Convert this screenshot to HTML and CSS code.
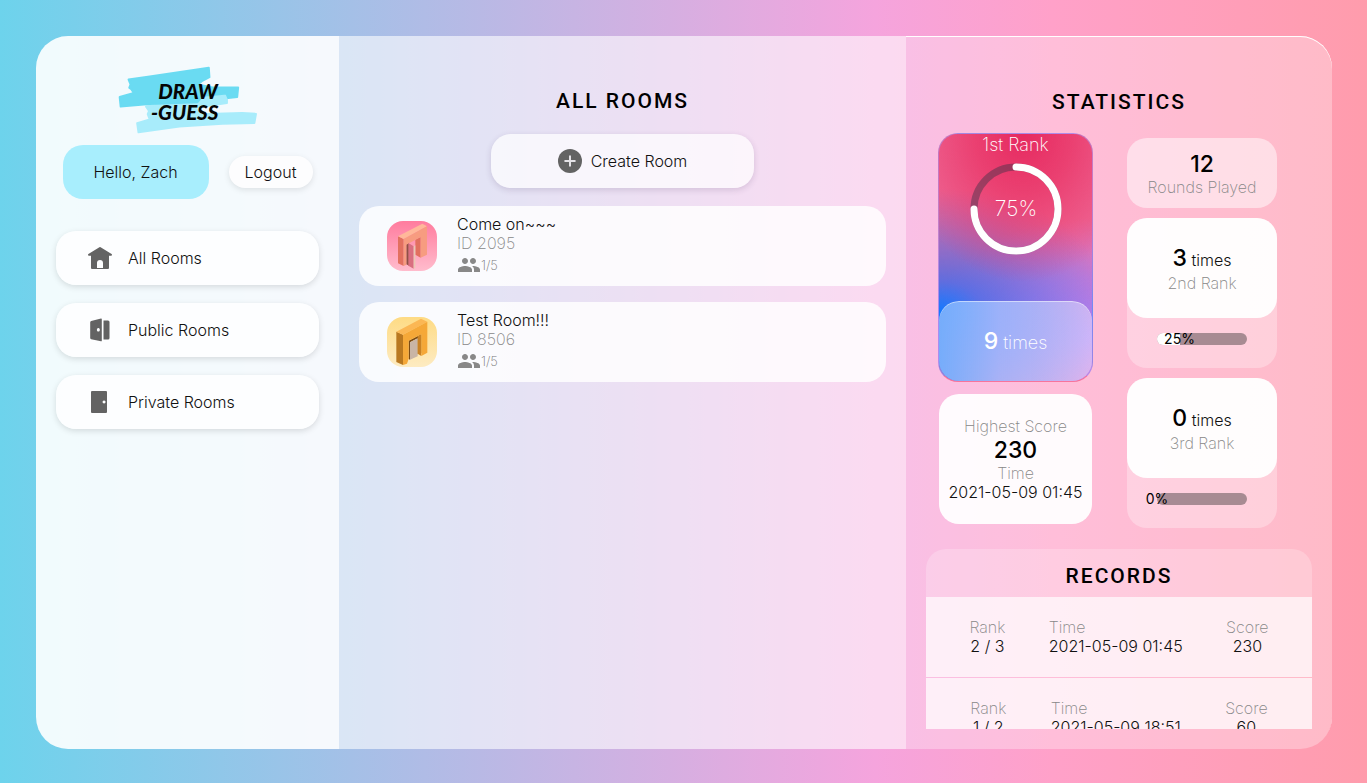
FILE: index.html
```html
<!DOCTYPE html>
<html lang="en">
<head>
<meta charset="utf-8">
<meta name="viewport" content="width=device-width, initial-scale=1">
<title>Draw-Guess</title>
<link rel="stylesheet" href="styles.css">
</head>
<body>
<div class="app">
  <aside class="sidebar">
    <svg class="logo" viewBox="246 90 420 206" role="img" aria-label="Draw-Guess">
      <path fill="#a8ecfb" stroke="#a8ecfb" stroke-width="6" stroke-linejoin="round" d="M329 213 L574 176 L574 202 L480 216 L490 236 L620 232 L662 235 L657 263 L560 265 L430 273 L306 291 L302 263 L340 252 L334 236 L338 226Z"/>
      <path fill="#6adbf2" stroke="#6adbf2" stroke-width="6" stroke-linejoin="round" d="M276 131 L340 122 L519 95 L521 124 L498 136 L486 146 L530 155 L608 155 L605 184 L578 187 L572 173 L500 181 L484 200 L340 205 L252 213 L249 184 L292 172 L284 160 L278 156 L282 146Z"/>
      <text class="logo-text" x="366" y="190">DRAW</text>
      <text class="logo-text" x="344" y="255">-GUESS</text>
    </svg>
    <div class="user">
      <div class="hello">Hello, Zach</div>
      <button class="logout" type="button">Logout</button>
    </div>
    <nav class="nav">
      <button class="nav-item" type="button">
        <svg class="icon" viewBox="0 0 24 24"><path fill-rule="evenodd" d="M11.4 1.2q.6-.4 1.2 0L23.6 8q.6.5.2 1.3-.4.7-1.2.5H21V22q0 1-1 1H4q-1 0-1-1V9.800H1.400q-.8.2-1.200-.5Q-.2 8.500.4 8ZM9 22h6v-5q0-3-3-3t-3 3Z"/></svg>
        All Rooms
      </button>
      <button class="nav-item" type="button">
        <svg class="icon" viewBox="0 0 24 24"><path fill-rule="evenodd" d="M3.200 3 13 .6q.8-.1.8.7v21.400q0 .8-.8.6L3.200 21.200q-1-.3-1-1.200V4.200q0-1 1-1.200ZM10.300 10a1.500 1.800 0 1 0 .1 0ZM15.500 2.500h4.500q1.500 0 1.500 1.500v16q0 1.500-1.500 1.500h-4.500Z"/></svg>
        Public Rooms
      </button>
      <button class="nav-item" type="button">
        <svg class="icon" viewBox="0 0 24 24"><path fill-rule="evenodd" d="M4 1h14q1 0 1 1v20q0 1-1 1H4q-1 0-1-1V2q0-1 1-1ZM16 10.500a1.500 1.500 0 1 0 .1 0Z"/></svg>
        Private Rooms
      </button>
    </nav>
  </aside>

  <main class="rooms">
    <h1 class="title">ALL ROOMS</h1>
    <button class="create" type="button">
      <svg class="icon" viewBox="0 0 24 24"><circle cx="12" cy="12" r="12"/><path d="M12 7.200v9.600M7.200 12h9.600" stroke="#e4e2e6" stroke-width="2" stroke-linecap="round"/></svg>
      Create Room
    </button>
    <ul class="room-list">
      <li class="room">
        <svg class="room-pic room-pic-pink" viewBox="0 0 150 150">
          <path fill="#e2705f" d="M33 46 50 54V135L33 127Z"/>
          <path fill="#ffb89a" d="M33 46 106 8 120 16 50 54Z"/>
          <path fill="#8f5046" d="M58 70 66 66V134L58 130Z"/>
          <path fill="#e2705f" d="M85 56 101 48V110L85 101Z"/>
          <path fill="#f79c80" d="M50 54 120 16V101L101 110V48L58 71V131L50 135Z"/>
          <path fill="#d96f80" d="M64 66 80 76V143L64 134Z"/>
          <path fill="#e9c8b4" d="M80 76 85 73V140L80 143Z"/>
        </svg>
        <div class="room-info">
          <div>Come on~~~</div>
          <div class="muted">ID 2095</div>
          <div class="people">
            <svg class="people-icon" viewBox="0 0 24 24"><path d="M16 11c1.660 0 2.990-1.340 2.990-3S17.660 5 16 5s-3 1.340-3 3 1.340 3 3 3zm-8 0c1.660 0 2.990-1.340 2.990-3S9.660 5 8 5 5 6.340 5 8s1.340 3 3 3zm0 2c-2.330 0-7 1.170-7 3.500V19h14v-2.500c0-2.330-4.670-3.500-7-3.500zm8 0c-.29 0-.62.02-.97.05 1.160.84 1.970 1.970 1.970 3.450V19h6v-2.500c0-2.330-4.670-3.500-7-3.500z"/></svg>1/5
          </div>
        </div>
      </li>
      <li class="room">
        <svg class="room-pic room-pic-gold" viewBox="0 0 150 150">
          <path fill="#b97820" d="M28 44 48 53V144L28 135Z"/>
          <path fill="#fbb754" d="M28 44 102 5 121 14 48 53Z"/>
          <path fill="#7c4c14" d="M65 71 103 52V108L92 112V64L69 76V128L65 126Z"/>
          <path fill="#c9b5a5" d="M69 76 92 64V118L69 128Z"/>
          <path fill="#c98224" d="M92 58 103 52V117L92 110Z"/>
          <path fill="#f5a838" d="M48 53 121 14V107L103 117V52L65 71V126L60 140 48 144Z"/>
        </svg>
        <div class="room-info">
          <div>Test Room!!!</div>
          <div class="muted">ID 8506</div>
          <div class="people">
            <svg class="people-icon" viewBox="0 0 24 24"><path d="M16 11c1.660 0 2.990-1.340 2.990-3S17.660 5 16 5s-3 1.340-3 3 1.340 3 3 3zm-8 0c1.660 0 2.990-1.340 2.990-3S9.660 5 8 5 5 6.340 5 8s1.340 3 3 3zm0 2c-2.330 0-7 1.170-7 3.500V19h14v-2.500c0-2.330-4.670-3.500-7-3.500zm8 0c-.29 0-.62.02-.97.05 1.160.84 1.970 1.970 1.970 3.450V19h6v-2.500c0-2.330-4.670-3.500-7-3.500z"/></svg>1/5
          </div>
        </div>
      </li>
    </ul>
  </main>

  <section class="stats">
    <h2 class="title">STATISTICS</h2>
    <div class="stat-grid">
      <div class="stat-left">
        <div class="first">
          <div class="first-label">1st Rank</div>
          <svg class="ring" viewBox="0 0 92 92" role="img" aria-label="75%">
            <circle class="ring-track" cx="46" cy="46" r="42"/>
            <circle class="ring-value" cx="46" cy="46" r="42" pathLength="100" stroke-dasharray="75 100" transform="rotate(-90 46 46)"/>
            <text class="ring-text" x="46" y="53">75%</text>
          </svg>
          <div class="first-times"><span class="big">9</span> times</div>
        </div>
        <div class="card highest">
          <div class="muted">Highest Score</div>
          <div class="number">230</div>
          <div class="muted">Time</div>
          <div>2021-05-09 01:45</div>
        </div>
      </div>
      <div class="stat-right">
        <div class="played">
          <div class="number">12</div>
          <div class="muted">Rounds Played</div>
        </div>
        <div class="rank">
          <div class="card rank-top">
            <div class="count"><span class="number">3</span> times</div>
            <div class="muted">2nd Rank</div>
          </div>
          <div class="bar" role="progressbar" aria-label="2nd Rank" aria-valuenow="25">
            <div class="bar-fill" style="width:25%"><span class="bar-label">25%</span></div>
          </div>
        </div>
        <div class="rank">
          <div class="card rank-top">
            <div class="count"><span class="number">0</span> times</div>
            <div class="muted">3rd Rank</div>
          </div>
          <div class="bar" role="progressbar" aria-label="3rd Rank" aria-valuenow="0">
            <div class="bar-fill" style="width:0%"><span class="bar-label">0%</span></div>
          </div>
        </div>
      </div>
    </div>
    <div class="records">
      <h2 class="records-title">RECORDS</h2>
      <div class="records-list">
        <div class="record">
          <div class="cell"><div class="muted">Rank</div><div>2 / 3</div></div>
          <div class="cell cell-time"><div class="muted">Time</div><div>2021-05-09 01:45</div></div>
          <div class="cell"><div class="muted">Score</div><div>230</div></div>
        </div>
        <div class="record">
          <div class="cell"><div class="muted">Rank</div><div>1 / 2</div></div>
          <div class="cell cell-time"><div class="muted">Time</div><div>2021-05-09 18:51</div></div>
          <div class="cell"><div class="muted">Score</div><div>60</div></div>
        </div>
      </div>
    </div>
  </section>
</div>
</body>
</html>
```
FILE: styles.css
```css
* { box-sizing: border-box; }

body {
  margin: 0;
  height: 100vh;
  padding: 36px 35px 34px 36px;
  background: linear-gradient(90deg, #6dd3ec 0%, #b0bce6 31%, #f5a4dd 64%, #ffa1c9 77%, #ff9cac 100%);
  font: 300 16px/19px Inter, "Noto Sans", sans-serif;
  color: #111;
}

button {
  border: 0;
  font: inherit;
  color: inherit;
  cursor: pointer;
}

.app {
  display: grid;
  grid-template-columns: 303fr 567fr 426fr;
  height: 100%;
}

.muted {
  font-weight: 200;
  color: #888;
}

.icon {
  flex: none;
  width: 24px;
  height: 24px;
  fill: #636363;
}

.title,
.records-title {
  margin: 0;
  font: 500 21px/28px Roboto, sans-serif;
  letter-spacing: 2px;
  text-align: center;
  color: #000;
}

/* Sidebar */
.sidebar {
  display: flex;
  flex-direction: column;
  align-items: center;
  padding: 30px 20px;
  border-radius: 32px 0 0 32px;
  background: rgba(255, 255, 255, 0.9);
}

.logo {
  width: 140px;
  height: 68px;
}

.logo-text {
  font: italic 900 62px Lato, sans-serif;
  fill: #050505;
}

.user {
  display: flex;
  align-items: center;
  gap: 20px;
  margin-top: 11px;
}

.hello {
  width: 146px;
  padding: 18px 0 17px;
  border-radius: 20px;
  background: #a8eefd;
  text-align: center;
}

.logout {
  width: 84px;
  height: 32px;
  padding: 0;
  border-radius: 16px;
  background: #fdfdfe;
  box-shadow: 0 2px 6px rgba(0, 0, 0, 0.1);
}

.nav {
  display: flex;
  flex-direction: column;
  gap: 18px;
  width: 100%;
  margin-top: 32px;
}

.nav-item {
  display: flex;
  align-items: center;
  gap: 16px;
  height: 54px;
  padding: 0 32px;
  border-radius: 20px;
  background: rgba(255, 255, 255, 0.8);
  box-shadow: 0 2px 6px rgba(0, 0, 0, 0.13);
}

/* Rooms */
.rooms {
  display: flex;
  flex-direction: column;
  align-items: center;
  padding: 51px 20px 20px;
  background: rgba(255, 255, 255, 0.6);
}

.create {
  display: flex;
  align-items: center;
  justify-content: center;
  gap: 9px;
  width: 50%;
  height: 54px;
  margin-top: 19px;
  border-radius: 20px;
  background: rgba(255, 255, 255, 0.7);
  box-shadow: 0 2px 6px rgba(60, 40, 90, 0.16);
}

.room-list {
  display: flex;
  flex-direction: column;
  gap: 16px;
  width: 100%;
  margin: 18px 0 0;
  padding: 0;
  list-style: none;
}

.room {
  display: flex;
  align-items: center;
  gap: 20px;
  height: 80px;
  padding: 0 28px;
  border-radius: 20px;
  background: rgba(255, 255, 255, 0.83);
}

.room-pic {
  width: 50px;
  height: 50px;
  border-radius: 16px;
}

.room-pic-pink { background: linear-gradient(#ff7c9e, #ffbccd); }
.room-pic-gold { background: linear-gradient(#fedb84, #fdebc2); }

.people {
  display: flex;
  align-items: center;
  height: 24px;
  font-size: 13px;
  font-weight: 200;
  color: #777;
}

.people-icon {
  width: 24px;
  height: 24px;
  fill: #888;
}

/* Statistics */
.stats {
  display: flex;
  flex-direction: column;
  min-height: 0;
  padding: 52px 20px 20px;
  border-radius: 0 32px 32px 0;
  background: rgba(255, 255, 255, 0.31);
  box-shadow: inset 0 1px 0 #fff;
}

.stat-grid {
  display: flex;
  gap: 34px;
  padding: 17px 12px 0;
}

.stat-left {
  display: flex;
  flex-direction: column;
  align-items: center;
  gap: 12px;
  width: 155px;
}

.stat-right {
  display: flex;
  flex-direction: column;
  gap: 10px;
  width: 150px;
  padding-top: 5px;
}

.card {
  display: flex;
  flex-direction: column;
  align-items: center;
  justify-content: center;
  border-radius: 20px;
  background: rgba(255, 255, 255, 0.94);
}

.number {
  font-size: 23px;
  font-weight: 500;
  line-height: 28px;
  color: #000;
}

.count { line-height: 28px; }

.first {
  display: flex;
  flex-direction: column;
  align-items: center;
  justify-content: space-between;
  width: 100%;
  height: 249px;
  border: 1px solid rgba(170, 150, 240, 0.6);
  border-bottom-color: #f8749c;
  border-radius: 20px;
  background:
    radial-gradient(ellipse 80% 60% at 55% 0, #e62a60 0%, rgba(233, 50, 100, 0.75) 40%, rgba(236, 80, 130, 0) 100%),
    radial-gradient(ellipse 115% 50% at 0 72%, #1479ff 0%, rgba(50, 110, 245, 0.75) 25%, rgba(120, 110, 220, 0) 100%),
    radial-gradient(ellipse 110% 48% at 100% 82%, #b882f5 0%, rgba(185, 130, 240, 0.7) 50%, rgba(215, 130, 205, 0) 100%),
    #ef6a98;
  color: #fff;
}

.first-label {
  font-size: 18px;
  font-weight: 200;
  line-height: 22px;
}

.ring {
  width: 92px;
  height: 92px;
  margin-bottom: 40px;
}

.ring-track,
.ring-value {
  fill: none;
  stroke-width: 7;
}

.ring-track { stroke: rgba(60, 50, 70, 0.45); }

.ring-value {
  stroke: #fff;
  stroke-linecap: round;
}

.ring-text {
  font-size: 21px;
  font-weight: 200;
  fill: #fff;
  text-anchor: middle;
}

.first-times {
  width: 100%;
  height: 80px;
  padding-top: 26px;
  border-radius: 20px;
  background: linear-gradient(90deg, #76adfb, rgba(150, 180, 255, 0.6) 40%, rgba(255, 255, 255, 0) 100%), rgba(255, 255, 255, 0.42);
  box-shadow: inset 0 1px 0 rgba(255, 255, 255, 0.5);
  font-size: 18px;
  font-weight: 200;
  line-height: 28px;
  text-align: center;
}

.big {
  font-size: 23px;
  font-weight: 500;
}

.highest {
  width: 153px;
  height: 130px;
}

.played {
  padding: 12px 0 11px;
  border-radius: 20px;
  background: rgba(255, 255, 255, 0.5);
  text-align: center;
}

.rank {
  height: 150px;
  border-radius: 20px;
  background: rgba(255, 255, 255, 0.3);
}

.rank-top { height: 100px; }

.bar {
  height: 12px;
  margin: 15px 30px 0;
  border-radius: 6px;
  background: rgba(35, 35, 35, 0.4);
}

.bar-fill {
  position: relative;
  height: 12px;
  border-radius: 6px 0 0 6px;
  background: #fff;
}

.bar-label {
  position: absolute;
  left: 100%;
  transform: translateX(-50%);
  font-size: 14px;
  font-weight: 400;
  line-height: 12px;
  color: #000;
}

/* Records */
.records {
  display: flex;
  flex: 1;
  flex-direction: column;
  min-height: 0;
  margin-top: 21px;
}

.records-title {
  padding: 13px 0 7px;
  border-radius: 20px 20px 0 0;
  background: rgba(255, 255, 255, 0.22);
}

.records-list {
  flex: 1;
  min-height: 0;
  overflow-y: auto;
  scrollbar-width: none;
}

.record {
  display: flex;
  align-items: center;
  justify-content: space-evenly;
  height: 80px;
  background: rgba(255, 255, 255, 0.75);
}

.record + .record { margin-top: 1px; }

.cell { text-align: center; }
.cell-time { text-align: left; }
```
